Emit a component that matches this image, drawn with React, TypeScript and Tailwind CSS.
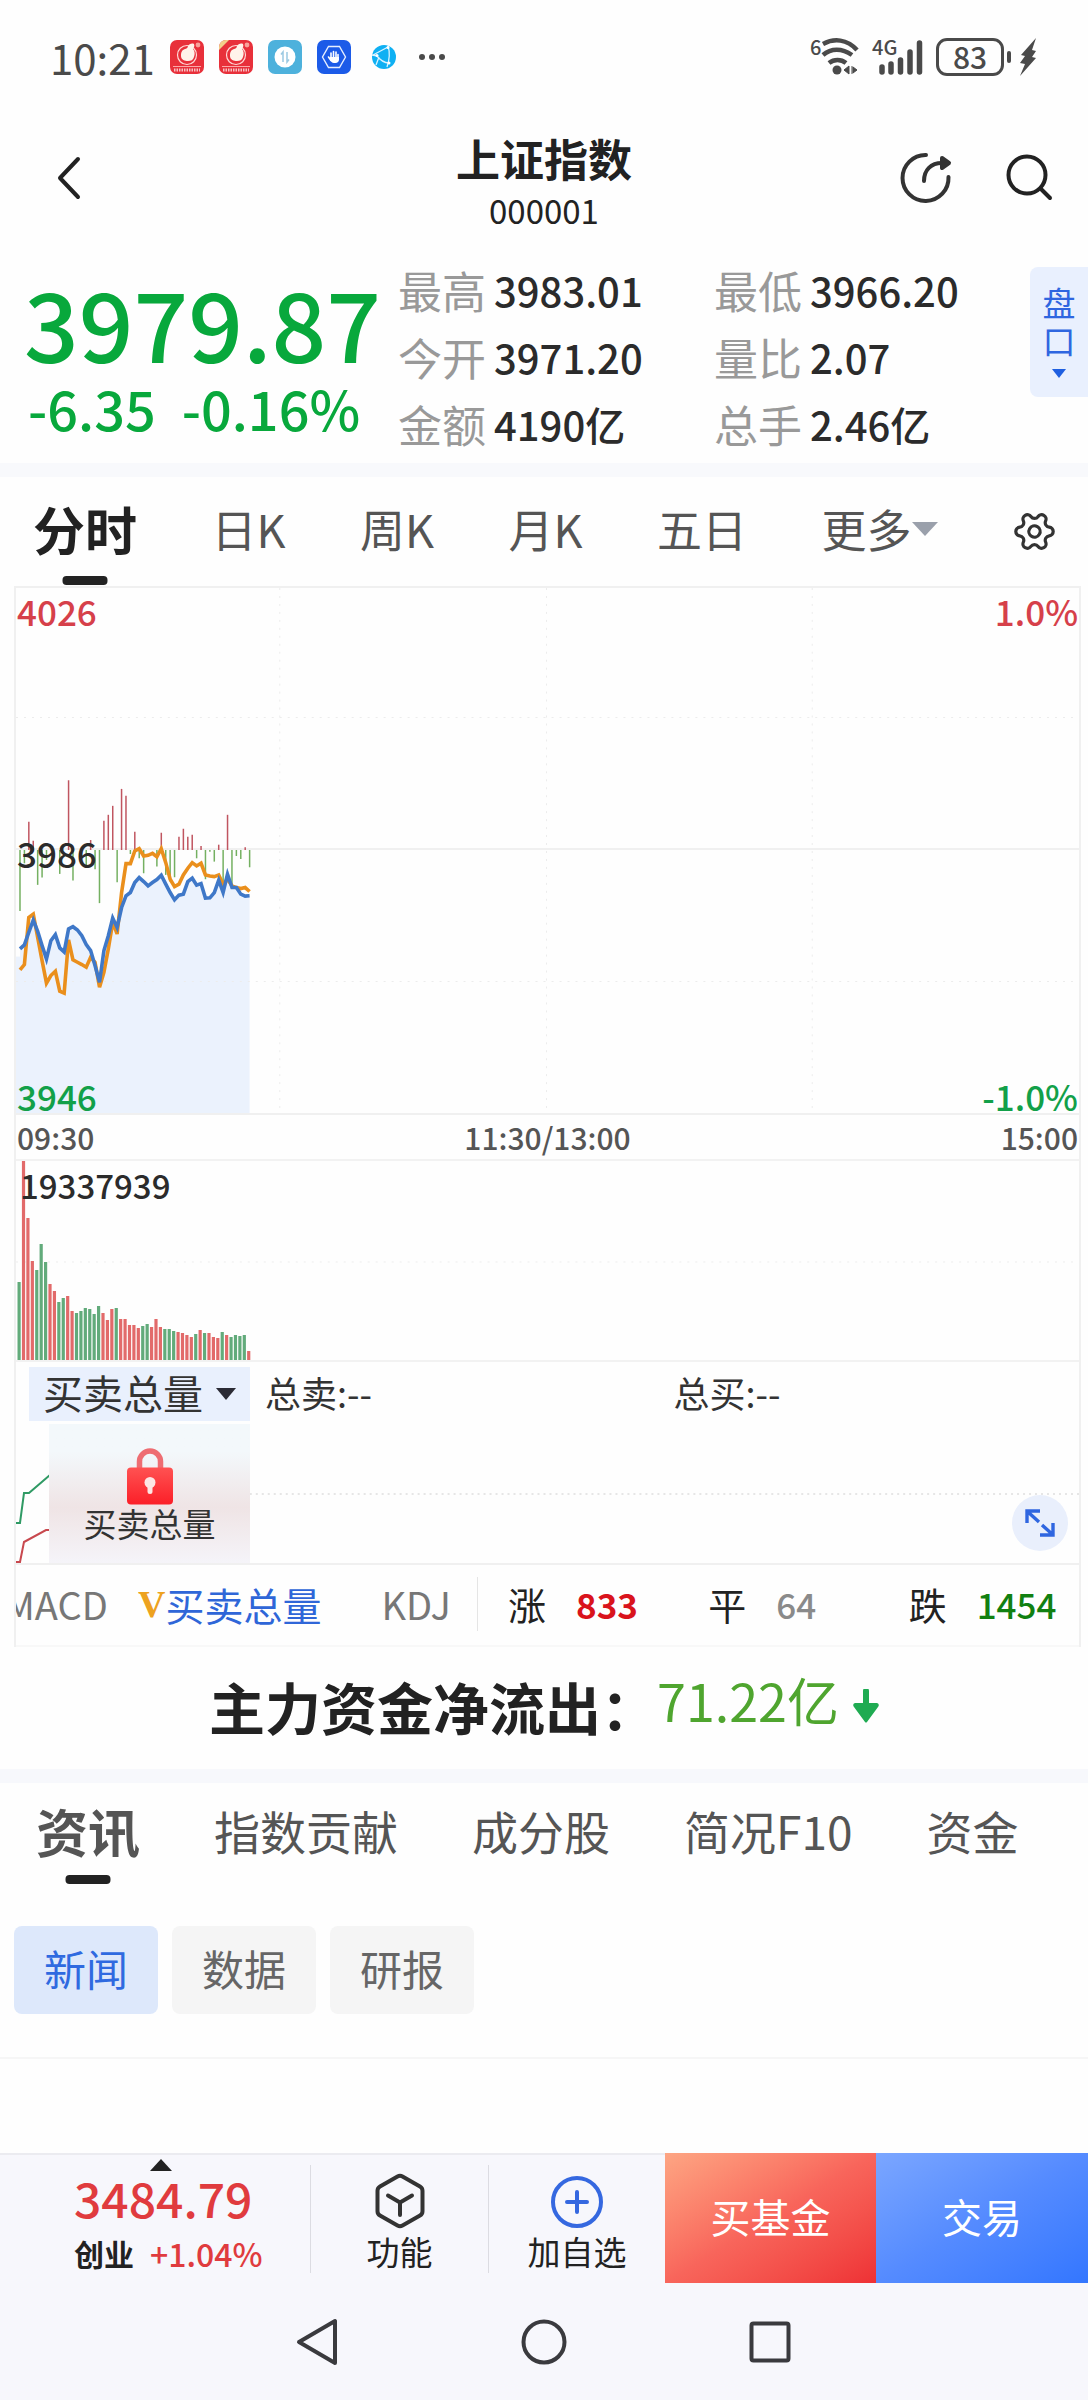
import { useState } from "react";
import type { ReactNode } from "react";
import { Settings } from "lucide-react";
import { clsx } from "clsx";

const STATS = [
    { label: "最高", value: "3983.01" },
    { label: "最低", value: "3966.20" },
    { label: "今开", value: "3971.20" },
    { label: "量比", value: "2.07" },
    { label: "金额", value: "4190亿" },
    { label: "总手", value: "2.46亿" },
];

const PERIODS = ["分时", "日K", "周K", "月K", "五日"];
const INFO_TABS = ["资讯", "指数贡献", "成分股", "简况F10", "资金"];
const NEWS_TABS = ["新闻", "数据", "研报"];

const BREADTH = [
    { label: "涨", value: "833", color: "font-bold text-[#d9131c]" },
    { label: "平", value: "64", color: "font-medium text-[#8a8a8a]" },
    { label: "跌", value: "1454", color: "font-medium text-[#118011]" },
];

// one sample per minute, in thirds of a pixel
const PRICE = [
    625, 613, 575, 538, 572, 615, 655, 600, 582, 622, 634, 565, 558, 568, 585, 612, 630, 675,
    725, 630, 585, 532, 560, 500, 465, 455, 425, 410, 422, 435, 425, 416, 403, 430, 455, 477,
    463, 460, 422, 412, 433, 428, 472, 471, 455, 418, 455, 400, 440, 440, 460, 466, 465,
];
const AVERAGE = [
    688, 672, 530, 520, 590, 660, 728, 705, 692, 752, 758, 598, 658, 665, 672, 680, 650, 665,
    740, 695, 625, 545, 580, 455, 368, 368, 330, 323, 345, 343, 337, 347, 323, 365, 415, 437,
    430, 402, 382, 365, 375, 367, 402, 405, 407, 402, 430, 415, 435, 440, 443, 440, 452,
];
const MOMENTUM = [
    -184, -40, 85, 28, -105, -83, -30, 0, 0, -72, 0, 210, -92, 0, 0, -50, 30, -58, -160, 88,
    106, 133, -97, 184, 163, -12, 55, -25, -70, 0, 0, -50, 52, -75, -95, -82, 40, 64, 40, 46,
    -25, 12, -88, -5, -35, 16, -115, 106, -115, -18, -27, 8, -52,
];
const VOLUME = [
    78, 199, 142, 99, 90, 116, 98, 76, 69, 58, 62, 64, 49, 47, 49, 52, 51, 46, 54, 47, 40, 51,
    52, 41, 41, 35, 35, 32, 34, 36, 33, 41, 33, 31, 31, 29, 28, 27, 25, 23, 26, 30, 27, 27, 23,
    22, 28, 25, 23, 25, 24, 25, 9,
];
const VOLUME_SIDE = "grrrgggrrggrrggggggrrrgrrrrrggrrrgggrrrrgrgrrrgrggggr";

const px = (i: number) => 4 + i * 4.42;
const py = (v: number) => 154 + v / 3;
const toPoints = (values: number[]) =>
    values.map((v, i) => `${px(i).toFixed(1)},${py(v).toFixed(1)}`).join(" ");

function RedAppIcon({ ribbon }: { ribbon?: boolean }) {
    return (
        <svg width="34" height="34" viewBox="0 0 34 34">
            <rect width="34" height="34" rx="7" fill="#e8303a" />
            <circle cx="17" cy="15" r="9.5" fill="none" stroke="#ffd9d6" strokeWidth="1.2" />
            <path
                d="M15 9c1 0 3-1 3-3 1-2 4-3 6-2 1 2-.5 4-1 5 2 2 2 5 1 8-1 3-3 4-6 4s-7-1-7-5c0-4 1-6 4-7z"
                fill="#fff3ea"
            />
            <circle cx="28" cy="5" r="2.4" fill="#f7a29a" />
            {ribbon && <path d="M0 8V7a7 7 0 0 1 7-7h3L0 10z" fill="#f2cf8a" />}
            <path d="M3 26.5h28" stroke="#ffc9c5" strokeWidth="0.8" />
            <path d="M4 30h26" stroke="#fff" strokeWidth="3" strokeDasharray="1.5 1" opacity=".7" />
        </svg>
    );
}

function StatusBar() {
    return (
        <div className="flex h-[114px] items-center justify-between pl-[50px] pr-[50px] text-[#4a4a4a]">
            <div className="flex items-center gap-[15px]">
                <span className="text-[42px] leading-none">10:21</span>
                <RedAppIcon />
                <RedAppIcon ribbon />
                <svg width="34" height="34" viewBox="0 0 34 34">
                    <rect width="34" height="34" rx="7" fill="#4db1dc" />
                    <circle cx="17" cy="17" r="10.5" fill="#fff" />
                    <path d="M15 22V12l-2 2.5M19 12v10l2-2.5" fill="none" stroke="#9cc9e2" strokeWidth="1.5" />
                </svg>
                <svg width="34" height="34" viewBox="0 0 34 34">
                    <rect width="34" height="34" rx="7" fill="#1c5be8" />
                    <path d="M11.5 6.5h11L28.5 17l-6 10.5h-11L5.5 17z" fill="none" stroke="#e6eeff" strokeWidth="1.4" />
                    <path
                        d="M14 19v-6M16.5 18v-6.5M19 18v-6M21 19v-4.5M11.5 17l2.5 3.5"
                        stroke="#fff"
                        strokeWidth="1.6"
                        strokeLinecap="round"
                    />
                    <path d="M13 17h9v2.5c0 2-1.5 3.5-3.5 3.5H17c-2 0-4-2-4-4z" fill="#fff" />
                </svg>
                <svg width="34" height="34" viewBox="0 0 34 34">
                    <circle cx="18" cy="17" r="12" fill="#0fb0f3" />
                    <path
                        d="M7 15l15-8M10 15c4 5 8 8 13 8M22 6c2 6 2 12-1 21M13 17l-3 8M6 15l6 1"
                        fill="none"
                        stroke="#d9f3ff"
                        strokeWidth="1.3"
                    />
                    <circle cx="22" cy="7.5" r="1.5" fill="#fff" />
                    <circle cx="11" cy="15.5" r="1.5" fill="#fff" />
                    <circle cx="23" cy="23" r="1.5" fill="#fff" />
                </svg>
                <svg className="ml-1" width="26" height="8" viewBox="0 0 26 8" fill="#4a4a4a">
                    <circle cx="3" cy="4" r="3" />
                    <circle cx="13" cy="4" r="3" />
                    <circle cx="23" cy="4" r="3" />
                </svg>
            </div>

            <div className="flex items-center gap-3">
                <svg className="overflow-visible" width="50" height="38" viewBox="0 0 50 38" fill="none">
                    <text x="0" y="17" fill="#4a4a4a" fontSize="20" fontWeight="500">6</text>
                    <path
                        d="M13 6c11-6 24-5 34 6M13 17c8-7 19-7 29 0M19 25c5-4 12-4 17 0"
                        stroke="#4a4a4a"
                        strokeWidth="4.5"
                    />
                    <circle cx="27" cy="32" r="4.5" fill="#4a4a4a" />
                    <path d="M34 32l5-4v8zM47 32l-4-3v6zM42 28v8" fill="#4a4a4a" stroke="#4a4a4a" />
                </svg>
                <svg className="overflow-visible" width="52" height="38" viewBox="0 0 52 38">
                    <text x="0" y="17" fill="#4a4a4a" fontSize="20" fontWeight="500">4G</text>
                    <path
                        d="M10 29v5M19 26v8M28.5 22v12M38 14v20M47.5 5v29"
                        stroke="#4a4a4a"
                        strokeWidth="5.5"
                        strokeLinecap="round"
                    />
                </svg>
                <div className="flex items-center gap-[3px]">
                    <div className="flex h-[38px] w-[68px] items-center justify-center rounded-[11px] border-[3px] border-[#4a4a4a] pb-[3px] text-[30px] font-medium leading-none">
                        83
                    </div>
                    <div className="h-3 w-1 rounded-sm bg-[#4a4a4a]" />
                    <svg className="ml-1" width="20" height="38" viewBox="0 0 20 38" fill="#4a4a4a">
                        <path d="M18 0L3 17l4 1-5 7 5 1-5 12 16-18-4-1 4-6-4-1z" />
                    </svg>
                </div>
            </div>
        </div>
    );
}

function TitleBar() {
    return (
        <header className="grid h-32 grid-cols-[1fr_auto_1fr] items-center px-[34px] text-[#222]">
            <button aria-label="返回" className="ml-5 justify-self-start">
                <svg width="28" height="46" viewBox="0 0 28 46" fill="none" stroke="currentColor" strokeWidth="4" strokeLinecap="round" strokeLinejoin="round">
                    <path d="M24 4L6 23l18 19" />
                </svg>
            </button>

            <div className="pt-3 text-center">
                <h1 className="text-[44px] font-bold leading-[52px]">上证指数</h1>
                <p className="text-[33px] leading-[52px]">000001</p>
            </div>

            <div className="flex items-center gap-[54px] justify-self-end">
                <button aria-label="分享">
                    <svg width="52" height="52" viewBox="0 0 52 52" fill="none" stroke="#333" strokeWidth="4" strokeLinecap="round">
                        <path d="M26 3A23 23 0 1 0 48.5 25M24 29c0-11 7-18 18-18" />
                        <path d="M42 6l7 5-7 5z" fill="#333" strokeLinejoin="round" />
                    </svg>
                </button>
                <button aria-label="搜索">
                    <svg width="48" height="48" viewBox="0 0 48 48" fill="none" stroke="currentColor" strokeWidth="4" strokeLinecap="round">
                        <circle cx="21" cy="21" r="18.5" />
                        <path d="M35 35l9 9" />
                    </svg>
                </button>
            </div>
        </header>
    );
}

function Quote() {
    return (
        <section className="grid grid-cols-[398fr_632fr_58fr] pb-[6px] pt-[14px]">
            <div className="pl-6 pt-[18px] font-medium text-[#08a83c]">
                <div className="text-[96px] leading-[96px]">3979.87</div>
                <div className="mt-2 flex gap-[26px] pl-1 text-[54px] leading-[60px]">
                    <span>-6.35</span>
                    <span>-0.16%</span>
                </div>
            </div>

            <dl className="grid grid-cols-2">
                {STATS.map((s) => (
                    <div key={s.label} className="flex h-[67px] items-center gap-2">
                        <dt className="text-[44px] leading-none text-[#999]">{s.label}</dt>
                        <dd className="text-[40px] font-medium leading-none text-[#2b2b2b]">{s.value}</dd>
                    </div>
                ))}
            </dl>

            <button className="mt-[11px] flex h-[130px] flex-col items-center rounded-l-lg bg-[#e9f0fe] pt-4 text-[33px] leading-[38px] text-[#2f66e0]">
                <span className="w-[33px]">盘口</span>
                <svg className="mt-[10px]" width="14" height="9" viewBox="0 0 14 9" fill="#1f5fe0">
                    <path d="M0 0h14L7 9z" />
                </svg>
            </button>
        </section>
    );
}

function PeriodTabs() {
    const [active, setActive] = useState("分时");

    return (
        <nav className="flex h-[109px] items-center justify-between pl-[33px] pr-[31px] text-[45px] text-[#555]">
            {PERIODS.map((p) => (
                <button
                    key={p}
                    onClick={() => setActive(p)}
                    className={clsx(
                        "relative h-full pb-[6px]",
                        active === p && "text-[52px] font-bold text-[#222]"
                    )}
                >
                    {p}
                    {active === p && (
                        <span className="absolute bottom-[1px] left-1/2 h-[9px] w-[45px] -translate-x-1/2 rounded bg-[#222]" />
                    )}
                </button>
            ))}
            <button aria-haspopup="menu" className="flex h-full items-center pb-[6px]">
                更多
                <svg width="26" height="14" viewBox="0 0 26 14" fill="#9aa0ab">
                    <path d="M0 0h26L13 14z" />
                </svg>
            </button>
            <button aria-label="设置">
                <Settings size={45} strokeWidth={1.7} className="rotate-30 text-[#333]" />
            </button>
        </nav>
    );
}

function PriceChart() {
    const line = toPoints(PRICE);

    return (
        <div className="relative h-[527px] border-b-2 border-[#f0f0f0] text-[35px] font-medium leading-[44px]">
            <svg className="h-full w-full" viewBox="0 0 1064 527" preserveAspectRatio="none" fill="none">
                <polygon points={`${px(0)},527 ${line} ${px(52)},527`} fill="#ebf2fd" />
                <rect x="0" y="370" width="4" height="157" fill="#ebf2fd" />
                <path d="M0 262h1064" stroke="#f0f0f0" strokeWidth="2" />
                <path
                    d="M0 130h1064M0 395h1064M264 0v527M531 0v527M797 0v527"
                    stroke="#ececec"
                    strokeDasharray="2 6"
                />
                {MOMENTUM.map((m, i) =>
                    m === 0 ? null : (
                        <path
                            key={i}
                            d={`M${px(i)} 263v${-m / 3}`}
                            stroke={m > 0 ? "#c05560" : "#74b061"}
                            strokeWidth="1.5"
                        />
                    )
                )}
                <polyline points={toPoints(AVERAGE)} stroke="#ea8f1c" strokeWidth="3.6" />
                <polyline points={line} stroke="#3f78c8" strokeWidth="3.6" />
            </svg>
            <span className="absolute left-[1px] top-[1px] text-[#d6404a]">4026</span>
            <span className="absolute right-[1px] top-[1px] text-[#d6404a]">1.0%</span>
            <span className="absolute left-[1px] top-[243px] text-[#2b2b2b]">3986</span>
            <span className="absolute bottom-[-5px] left-[1px] text-[#12a049]">3946</span>
            <span className="absolute bottom-[-5px] right-[1px] text-[#12a049]">-1.0%</span>
        </div>
    );
}

function VolumeChart() {
    return (
        <div className="relative h-[203px] border-b-2 border-t-2 border-[#f2f2f2]">
            <svg className="h-full w-full" viewBox="0 0 1064 199" preserveAspectRatio="none" fill="none">
                <path d="M0 101h1064" stroke="#eeeeee" strokeDasharray="2 6" />
                {VOLUME.map((v, i) => (
                    <rect
                        key={i}
                        x={1.5 + i * 4.42}
                        y={199 - v}
                        width="3.2"
                        height={v}
                        fill={VOLUME_SIDE[i] === "r" ? "#e26a6a" : "#62ab7b"}
                    />
                ))}
            </svg>
            <span className="absolute left-1 top-[2px] text-[33px] font-medium leading-[44px] text-[#2b2b2b]">
                19337939
            </span>
        </div>
    );
}

function OrderChart() {
    return (
        <div className="relative border-b-2 border-[#f0f0f0] pt-[5px] text-[#333]">
            <div className="flex h-[54px] items-center text-[36px] leading-[50px]">
                <div className="relative ml-[13px] h-full w-[221px] bg-[#e9f0fd]">
                    <select
                        aria-label="副图指标"
                        className="h-full w-full appearance-none pb-1 pl-[14px] text-[40px] leading-[50px] text-[#333]"
                    >
                        <option>买卖总量</option>
                    </select>
                    <svg className="pointer-events-none absolute right-[14px] top-[21px]" width="20" height="12" viewBox="0 0 20 12" fill="#2b2b35">
                        <path d="M0 0h20L10 12z" />
                    </svg>
                </div>
                <span className="ml-[15px] flex-[409] pb-1">总卖:--</span>
                <span className="flex-[406] pb-1">总买:--</span>
            </div>

            <div className="relative h-[142px]">
                <svg className="h-full w-full" viewBox="0 0 1064 142" preserveAspectRatio="none" fill="none">
                    <path d="M234 73h830" stroke="#e6e6e6" strokeWidth="2" strokeDasharray="2 4" />
                    <path d="M0 102h4l4-30h5l21-18" stroke="#2f9a64" strokeWidth="2" />
                    <path d="M0 141h4l4-20 22-12h4" stroke="#c8484e" strokeWidth="2" />
                </svg>
                <button className="absolute bottom-0 left-[33px] top-[3px] flex w-[201px] flex-col items-center bg-linear-to-b from-[#f3f8fb] from-20% via-[#efe4e5] via-60% to-[#f5f4f9] pt-6 text-[33px] leading-[36px]">
                    <svg width="48" height="57" viewBox="0 0 48 56">
                        <defs>
                            <linearGradient id="lock" x1="0" y1="0" x2="0" y2="1">
                                <stop offset="0" stopColor="#ff5252" />
                                <stop offset="1" stopColor="#fb1f28" />
                            </linearGradient>
                        </defs>
                        <path d="M13.5 22V13a10.5 10.5 0 0 1 21 0v9" fill="none" stroke="#ee6d72" strokeWidth="5.5" />
                        <rect x="1" y="19" width="46" height="37" rx="4" fill="url(#lock)" />
                        <circle cx="24" cy="34" r="5.5" fill="#fde6e4" />
                        <path d="M21.5 34h5v9a2.5 2.5 0 0 1-5 0z" fill="#fde6e4" />
                    </svg>
                    <span>买卖总量</span>
                </button>
                <button
                    aria-label="全屏"
                    className="absolute bottom-3 right-[11px] flex size-14 items-center justify-center rounded-full bg-[#e9effc]"
                >
                    <svg width="30" height="30" viewBox="0 0 30 30" fill="none" stroke="#2f66e0" strokeWidth="3.4">
                        <path d="M2 15V3h13M3 4l11 10M28 15v12H15M27 26L17 17" />
                    </svg>
                </button>
            </div>
        </div>
    );
}

function IndicatorRow() {
    return (
        <div className="flex h-[82px] items-center border-b-2 border-[#f8f8f8] pb-[2px] text-[38px] leading-[60px]">
            <div className="flex w-[461px] shrink-0 items-center overflow-hidden text-[#777]">
                <button className="-ml-3">MACD</button>
                <button className="ml-[30px] flex items-center text-[#2f66d8]">
                    <span className="font-['Liberation_Serif',serif] font-bold text-[#eda220]">V</span>
                    <span className="text-[39px]">买卖总量</span>
                </button>
                <button className="ml-[60px]">KDJ</button>
            </div>
            <div className="h-[54px] w-px bg-[#e5e5e5]" />
            <div className="grid flex-1 grid-cols-3 text-[#222]">
                {BREADTH.map((b) => (
                    <div key={b.label} className="flex items-center gap-[30px] pl-[30px]">
                        <span>{b.label}</span>
                        <span className={clsx("text-[35px]", b.color)}>{b.value}</span>
                    </div>
                ))}
            </div>
        </div>
    );
}

function InfoSection() {
    const [tab, setTab] = useState("资讯");
    const [news, setNews] = useState("新闻");

    return (
        <section className="border-b-2 border-[#f6f6f6] pb-[43px]">
            <nav className="flex h-[101px] items-center gap-[74px] pl-[36px] text-[46px] text-[#555]">
                {INFO_TABS.map((t) => (
                    <button
                        key={t}
                        onClick={() => setTab(t)}
                        className={clsx("relative h-full pb-[6px]", tab === t && "text-[52px] font-bold")}
                    >
                        {t}
                        {tab === t && (
                            <span className="absolute bottom-0 left-1/2 h-[9px] w-[45px] -translate-x-1/2 rounded bg-[#222]" />
                        )}
                    </button>
                ))}
            </nav>
            <div className="mt-[42px] flex gap-[14px] pl-[14px] text-[42px]">
                {NEWS_TABS.map((n) => (
                    <button
                        key={n}
                        onClick={() => setNews(n)}
                        className={clsx(
                            "h-[88px] w-36 rounded-lg pb-[6px]",
                            news === n ? "bg-[#dde8fb] text-[#2f6ae0]" : "bg-[#f5f5f5] text-[#666]"
                        )}
                    >
                        {n}
                    </button>
                ))}
            </div>
        </section>
    );
}

function BarAction({ icon, label }: { icon: ReactNode; label: string }) {
    return (
        <div className="flex items-center border-t-2 border-[#ebebf0]">
            <div className="h-[108px] w-px bg-[#dcdce2]" />
            <button className="flex flex-1 flex-col items-center self-start pt-[18px] text-[33px] leading-[44px] text-[#222]">
                {icon}
                <span>{label}</span>
            </button>
        </div>
    );
}

function ActionBar() {
    return (
        <div className="grid h-[130px] grid-cols-[310fr_178fr_177fr_211fr_212fr]">
            <div className="relative border-t-2 border-[#ebebf0] pl-[74px] pt-[14px]">
                <svg className="absolute left-1/2 top-1 ml-[-5px]" width="22" height="12" viewBox="0 0 22 12" fill="#222">
                    <path d="M11 0l11 12H0z" />
                </svg>
                <div className="text-[48px] font-medium leading-[56px] text-[#e03b3e]">3484.79</div>
                <div className="mt-[6px] flex items-center gap-4 leading-[44px]">
                    <span className="text-[30px] font-bold text-[#222]">创业</span>
                    <span className="text-[32px] font-medium text-[#e03b3e]">+1.04%</span>
                </div>
            </div>
            <BarAction
                label="功能"
                icon={
                    <svg width="52" height="56" viewBox="0 0 52 56" fill="none" stroke="#333" strokeWidth="4" strokeLinecap="round" strokeLinejoin="round">
                        <path d="M23.5 3.5a5 5 0 0 1 5 0L46 13.5a5 5 0 0 1 2.5 4.3v20.4a5 5 0 0 1-2.5 4.3L28.5 52.5a5 5 0 0 1-5 0L6 42.5a5 5 0 0 1-2.5-4.3V17.8A5 5 0 0 1 6 13.5z" />
                        <path d="M14 22.5l12 7 12-7M26 29.5V42" />
                    </svg>
                }
            />
            <BarAction
                label="加自选"
                icon={
                    <svg width="52" height="56" viewBox="0 0 52 56" fill="none" stroke="#3568e0" strokeWidth="4" strokeLinecap="round">
                        <circle cx="26" cy="29" r="24" />
                        <path d="M26 19v20M16 29h20" />
                    </svg>
                }
            />
            <button className="bg-linear-to-br from-[#fda583] via-[#f8655b] to-[#ee3035] pb-1 text-[40px] text-white">
                买基金
            </button>
            <button className="bg-linear-to-br from-[#7ba6ff] via-[#558bff] to-[#3376ff] pb-1 text-[40px] text-white">
                交易
            </button>
        </div>
    );
}

function SystemNav() {
    return (
        <div className="flex h-[117px] items-center justify-center gap-[178px]">
            <button aria-label="后退">
                <svg width="48" height="48" viewBox="0 0 48 48" fill="none" stroke="#3a3a3e" strokeWidth="4" strokeLinejoin="round">
                    <path d="M41 3v42L5 24z" />
                </svg>
            </button>
            <button aria-label="主页">
                <svg width="48" height="48" viewBox="0 0 48 48" fill="none" stroke="#3a3a3e" strokeWidth="4">
                    <circle cx="24" cy="24" r="20.5" />
                </svg>
            </button>
            <button aria-label="最近任务">
                <svg width="48" height="48" viewBox="0 0 48 48" fill="none" stroke="#3a3a3e" strokeWidth="4">
                    <rect x="5.5" y="5.5" width="37" height="37" rx="2" />
                </svg>
            </button>
        </div>
    );
}

export default function App() {
    return (
        <div className="flex min-h-screen flex-col bg-[#fefefe] font-['Noto_Sans_CJK_SC',sans-serif]">
            <StatusBar />
            <TitleBar />
            <main className="flex-1">
                <Quote />
                <div className="h-[14px] bg-[#f8f9fc]" />
                <PeriodTabs />
                <section className="ml-[14px] mr-[7px] border-x-2 border-t-2 border-[#f0f0f0]">
                    <PriceChart />
                    <div className="flex h-[44px] items-center justify-between px-px text-[30px] font-medium text-[#555]">
                        <span>09:30</span>
                        <span>11:30/13:00</span>
                        <span>15:00</span>
                    </div>
                    <VolumeChart />
                    <OrderChart />
                    <IndicatorRow />
                </section>

                <section className="flex h-[122px] items-center justify-center pb-[5px]">
                    <h2 className="text-[56px] font-bold text-[#222]">主力资金净流出：</h2>
                    <span className="pb-3 text-[52px] text-[#4fa52f]">71.22亿</span>
                    <svg className="ml-[14px]" width="26" height="34" viewBox="0 0 26 34" fill="#1fab52">
                        <path d="M10 2a3 3 0 0 1 6 0v12h8q3 1 1 4L14 33q-1 1-2 0L1 18q-2-3 1-4h8z" />
                    </svg>
                </section>
                <div className="h-[14px] bg-[#f7f8fc]" />
                <InfoSection />
            </main>
            <div className="bg-[#f7f7fc]">
                <ActionBar />
                <SystemNav />
            </div>
        </div>
    );
}
